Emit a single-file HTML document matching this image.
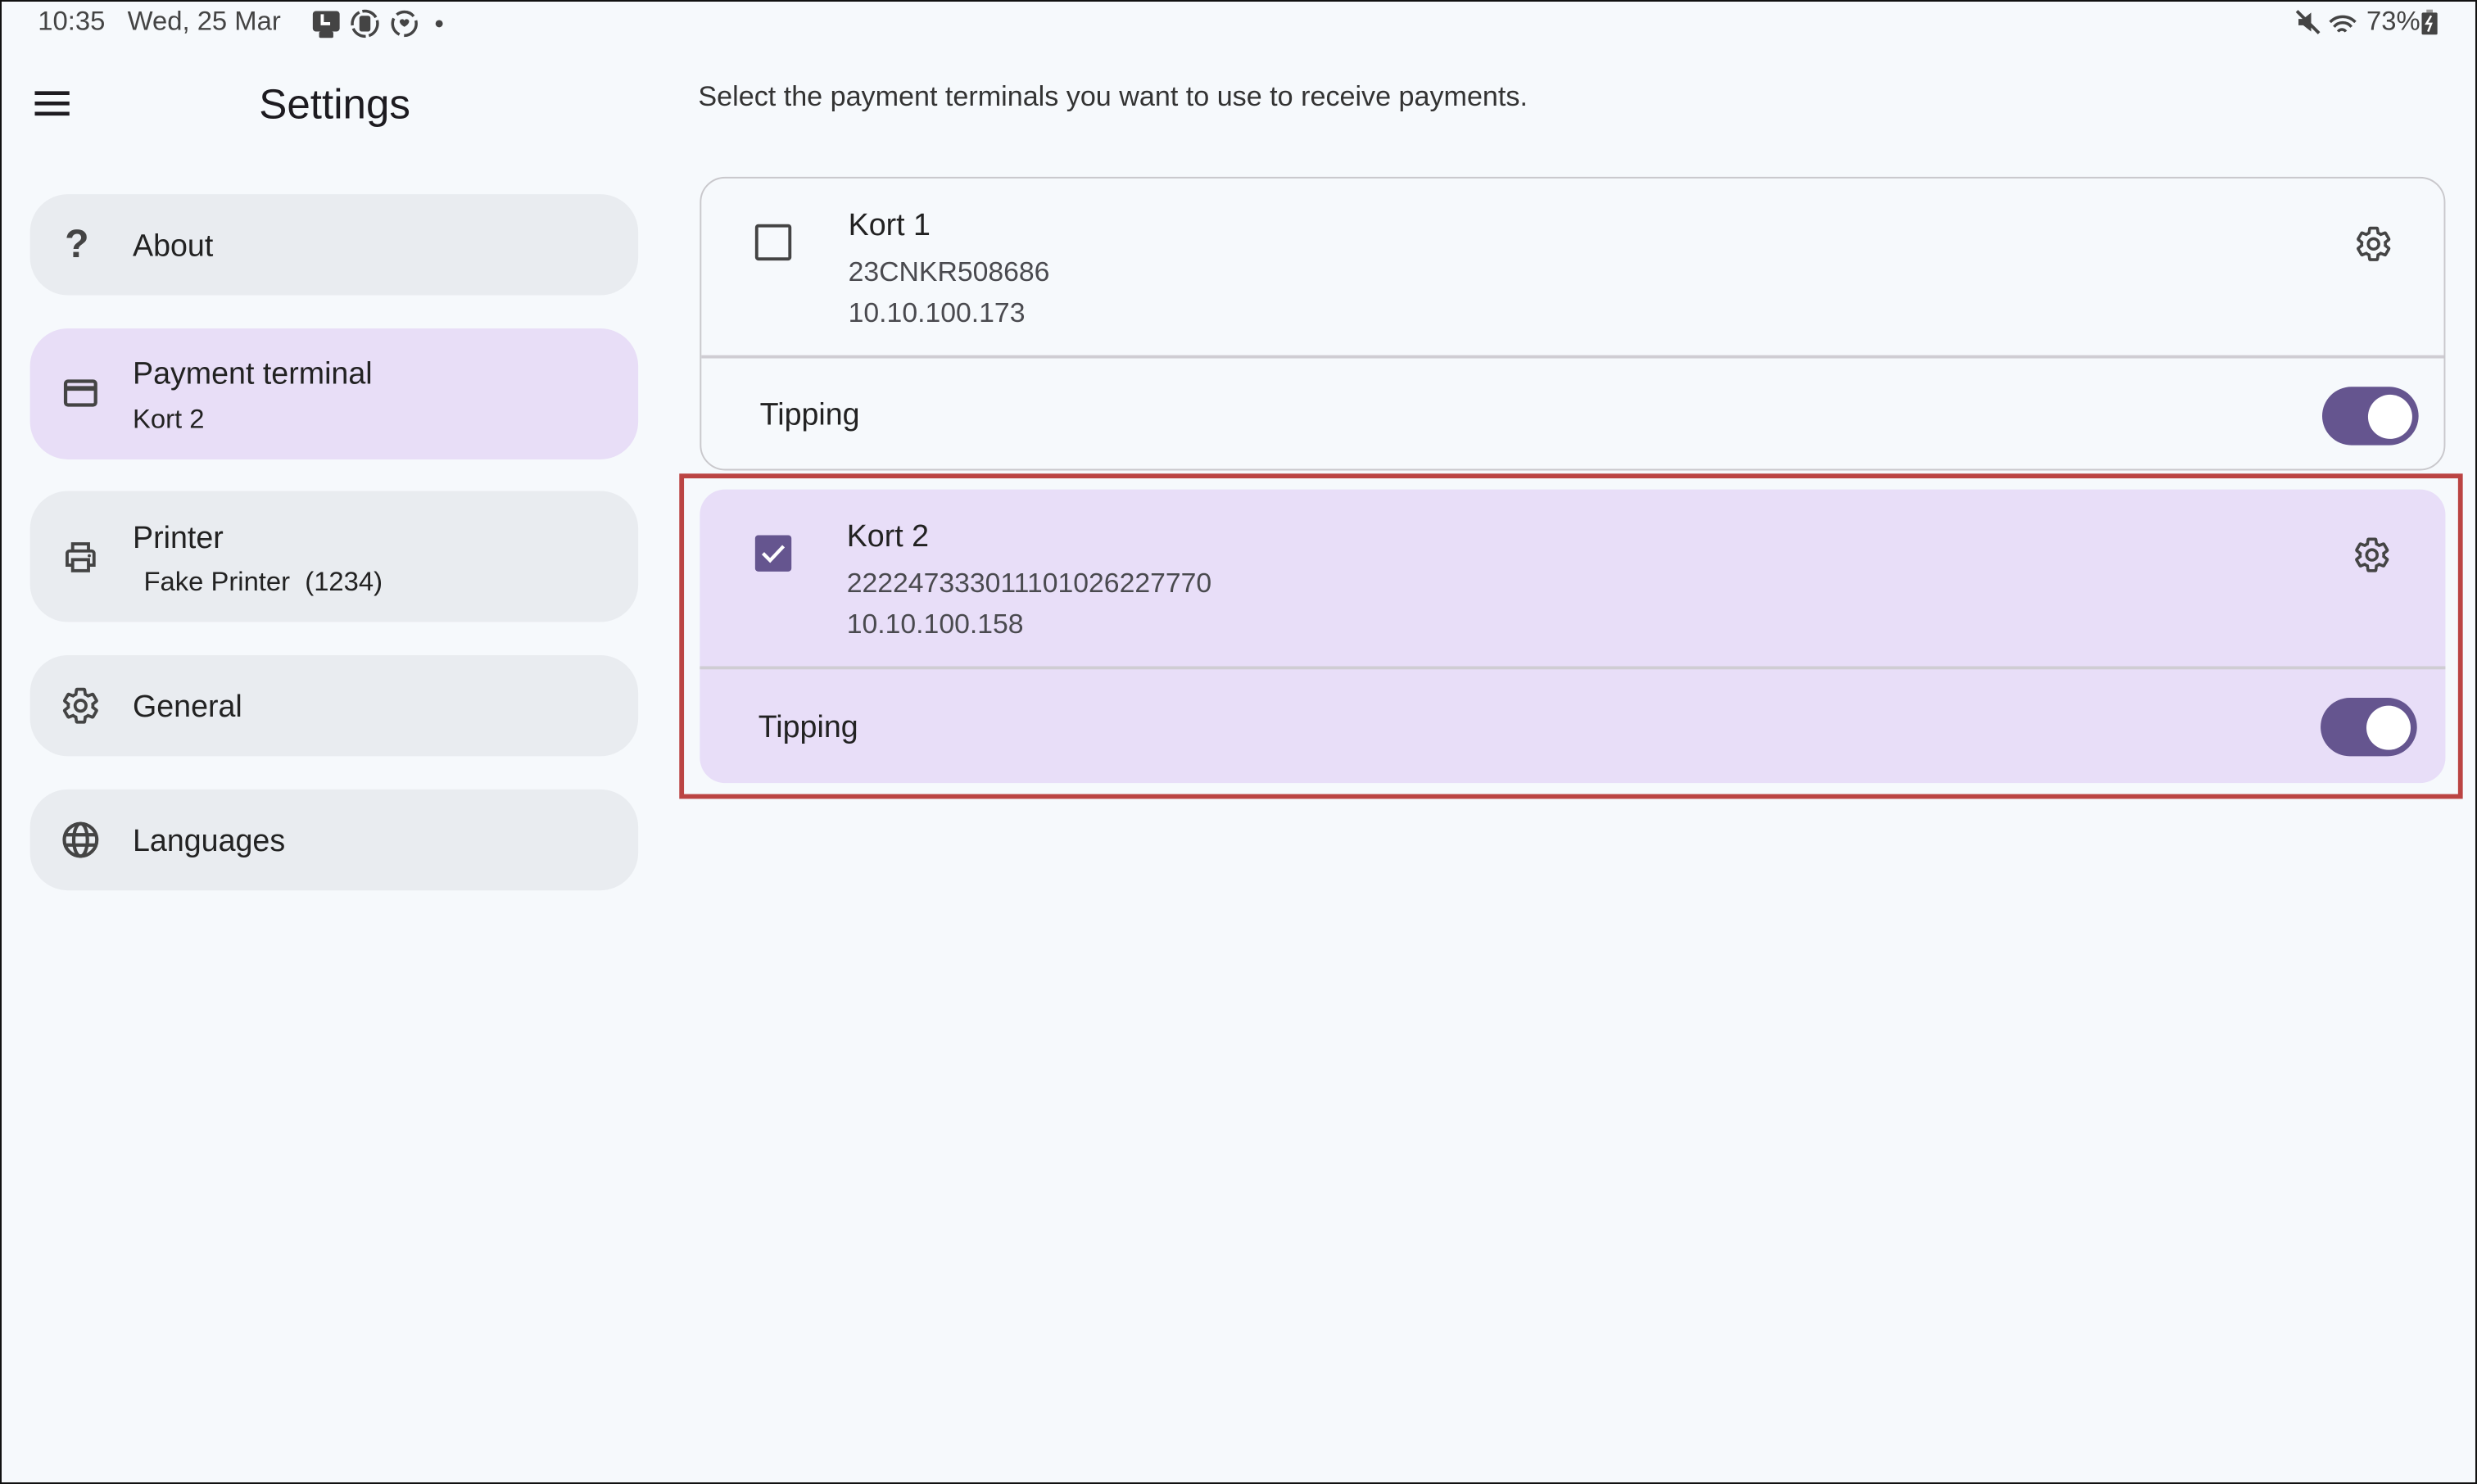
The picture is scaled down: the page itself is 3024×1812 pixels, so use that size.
<!DOCTYPE html>
<html><head><meta charset="utf-8"><style>
html,body{margin:0;padding:0;background:#f6f9fc;}
body{width:3024px;height:1812px;overflow:hidden;position:relative;}
#frame{position:absolute;left:0;top:0;width:3020px;height:1808px;border:2px solid #111;}
#s{position:absolute;left:0;top:0;width:1568px;height:940px;transform:scale(1.92857,1.92766);transform-origin:0 0;font-family:"Liberation Sans",sans-serif;color:#1d1b20;}
.a{position:absolute;white-space:nowrap;}
.nav{position:absolute;left:19px;width:385px;background:#e9ecf0;border-radius:24px;}
.nav.sel{background:#e8def7;}
.nav .t{position:absolute;left:65px;font-size:19.5px;color:#222;}
.nav .sub{position:absolute;left:65px;font-size:17px;color:#222;}
.nav svg{position:absolute;left:20px;}
.card{position:absolute;left:443px;width:1105px;height:186px;border-radius:16px;box-sizing:border-box;}
.card .title{position:absolute;left:93px;top:19px;font-size:19.5px;color:#222;}
.card .l1{position:absolute;left:93px;top:49px;font-size:17.5px;color:#4a4a4f;}
.card .l2{position:absolute;left:93px;top:75px;font-size:17.5px;color:#4a4a4f;}
.card .div{position:absolute;left:0;right:0;top:112px;height:1.5px;background:#cfcdd3;}
.card .tip{position:absolute;left:37px;top:140px;font-size:19.5px;color:#222;}
.card .sw{position:absolute;left:1026px;top:132px;width:61px;height:37px;border-radius:19px;background:#65558f;}
.card .sw:after{content:"";position:absolute;right:4px;top:4.5px;width:28px;height:28px;border-radius:50%;background:#fff;}
.card .gear{position:absolute;left:1046px;top:29px;}
</style></head><body>
<div id="s">
 <div class="a" style="left:24px;top:4px;font-size:17px;color:#444;">10:35&nbsp;&nbsp;&nbsp;Wed, 25 Mar</div>
 <svg class="a" style="left:197px;top:5px" width="90" height="20" viewBox="0 0 90 20">
  <rect x="1" y="2" width="17" height="13" rx="2" fill="#444"/><path d="M7 4v6h5" stroke="#fff" stroke-width="2" fill="none"/><rect x="5" y="15" width="9" height="4" rx="1" fill="#444"/>
  <circle cx="34" cy="10" r="8" fill="none" stroke="#444" stroke-width="1.8" stroke-dasharray="10 2"/><rect x="30.5" y="5" width="7" height="10" rx="1.5" fill="#444"/>
  <circle cx="59" cy="10" r="7.5" fill="none" stroke="#444" stroke-width="1.8" stroke-dasharray="12 3"/><path d="M56 8.5a1.6 1.6 0 0 1 3-0.5a1.6 1.6 0 0 1 3 0.5c0 2-3 3.5-3 3.5s-3-1.5-3-3.5z" fill="#444"/>
  <circle cx="81" cy="10" r="2.3" fill="#444"/>
 </svg>
 <svg class="a" style="left:1452px;top:5px" width="44" height="20" viewBox="0 0 44 20">
  <path d="M3 7h3l5-4v12l-5-4H3z" fill="#444"/><path d="M2 2l14 14" stroke="#444" stroke-width="2"/>
  <path d="M23 9a11 11 0 0 1 16 0M25.5 12a7 7 0 0 1 11 0M28 15a3 3 0 0 1 5 0" stroke="#444" stroke-width="1.8" fill="none"/>
 </svg>
 <div class="a" style="left:1498px;top:4px;font-size:17px;color:#444;">73%</div>
 <svg class="a" style="left:1533px;top:6px" width="10" height="16" viewBox="0 0 10 16"><rect x="3" y="0" width="4" height="2" fill="#999"/><rect x="0" y="2" width="10" height="14" rx="1" fill="#444"/><path d="M6 4L3 9h3l-2 5" stroke="#fff" stroke-width="1.3" fill="none"/></svg>

 <svg class="a" style="left:22px;top:57px" width="22" height="17" viewBox="0 0 22 17"><path d="M0 2h22M0 8.5h22M0 15h22" stroke="#1d1b20" stroke-width="2.4"/></svg>
 <div class="a" style="left:164px;top:51px;font-size:26.5px;color:#1d1b20;">Settings</div>

 <div class="nav" style="top:123px;height:64px;">
  <div class="a" style="left:22px;top:18px;font-size:25px;font-weight:bold;color:#444;">?</div>
  <div class="t" style="top:22px;">About</div>
 </div>
 <div class="nav sel" style="top:208px;height:83px;">
  <svg width="24" height="24" viewBox="0 0 24 24" style="top:29px"><rect x="2.5" y="4.5" width="19" height="15" rx="1.5" fill="none" stroke="#444" stroke-width="2.2"/><path d="M3 9h18" stroke="#444" stroke-width="3"/></svg>
  <div class="t" style="top:18px;">Payment terminal</div>
  <div class="sub" style="top:48px;">Kort 2</div>
 </div>
 <div class="nav" style="top:311px;height:83px;">
  <svg width="24" height="24" viewBox="0 0 24 24" style="top:30px"><path d="M7 8V3.5h10V8" fill="none" stroke="#444" stroke-width="2"/><path d="M6.5 17H3.5v-7.5a1.5 1.5 0 0 1 1.5-1.5h14a1.5 1.5 0 0 1 1.5 1.5V17h-3" fill="none" stroke="#444" stroke-width="2"/><rect x="7" y="13.5" width="10" height="7" fill="none" stroke="#444" stroke-width="2"/><circle cx="17.5" cy="11" r="1" fill="#444"/></svg>
  <div class="t" style="top:19px;">Printer</div>
  <div class="sub" style="top:48px;left:72px;">Fake Printer&nbsp; (1234)</div>
 </div>
 <div class="nav" style="top:415px;height:64px;">
  <svg width="26" height="26" viewBox="0 0 24 24" style="top:19px;left:19px"><path d="M19.14 12.94c.04-.3.06-.61.06-.94 0-.32-.02-.64-.07-.94l2.03-1.58c.18-.14.23-.41.12-.61l-1.92-3.32c-.12-.22-.37-.29-.59-.22l-2.39.96c-.5-.38-1.03-.7-1.62-.94l-.36-2.54c-.04-.24-.24-.41-.48-.41h-3.84c-.24 0-.43.17-.47.41l-.36 2.54c-.59.24-1.13.57-1.62.94l-2.39-.96c-.22-.08-.47 0-.59.22L2.74 8.87c-.12.21-.08.47.12.61l2.03 1.58c-.05.3-.09.63-.09.94s.02.64.07.94l-2.03 1.58c-.18.14-.23.41-.12.61l1.92 3.32c.12.22.37.29.59.22l2.39-.96c.5.38 1.03.7 1.62.94l.36 2.54c.05.24.24.41.48.41h3.84c.24 0 .44-.17.47-.41l.36-2.54c.59-.24 1.13-.56 1.62-.94l2.39.96c.22.08.47 0 .59-.22l1.92-3.32c.12-.22.07-.47-.12-.61z" fill="none" stroke="#444" stroke-width="1.8"/><circle cx="12" cy="12" r="3.2" fill="none" stroke="#444" stroke-width="1.8"/></svg>
  <div class="t" style="top:22px;">General</div>
 </div>
 <div class="nav" style="top:500px;height:64px;">
  <svg width="26" height="26" viewBox="0 0 24 24" style="top:19px;left:19px"><circle cx="12" cy="12" r="9.5" fill="none" stroke="#444" stroke-width="2"/><ellipse cx="12" cy="12" rx="4" ry="9.5" fill="none" stroke="#444" stroke-width="2"/><path d="M2.5 9h19M2.5 15h19" stroke="#444" stroke-width="2"/></svg>
  <div class="t" style="top:22px;">Languages</div>
 </div>

 <div class="a" style="left:442px;top:51px;font-size:17.7px;color:#333;">Select the payment terminals you want to use to receive payments.</div>

 <div class="card" style="top:112px;border:1.5px solid #c9c8cc;background:#f6f9fc;">
  <div class="a" style="left:34px;top:29px;width:19px;height:19px;border:2.2px solid #444;border-radius:2px;"></div>
  <div class="title">Kort 1</div><div class="l1">23CNKR508686</div><div class="l2">10.10.100.173</div>
  <svg class="gear" width="25" height="25" viewBox="0 0 24 24"><path d="M19.14 12.94c.04-.3.06-.61.06-.94 0-.32-.02-.64-.07-.94l2.03-1.58c.18-.14.23-.41.12-.61l-1.92-3.32c-.12-.22-.37-.29-.59-.22l-2.39.96c-.5-.38-1.03-.7-1.62-.94l-.36-2.54c-.04-.24-.24-.41-.48-.41h-3.84c-.24 0-.43.17-.47.41l-.36 2.54c-.59.24-1.13.57-1.62.94l-2.39-.96c-.22-.08-.47 0-.59.22L2.74 8.87c-.12.21-.08.47.12.61l2.03 1.58c-.05.3-.09.63-.09.94s.02.64.07.94l-2.03 1.58c-.18.14-.23.41-.12.61l1.92 3.32c.12.22.37.29.59.22l2.39-.96c.5.38 1.03.7 1.62.94l.36 2.54c.05.24.24.41.48.41h3.84c.24 0 .44-.17.47-.41l.36-2.54c.59-.24 1.13-.56 1.62-.94l2.39.96c.22.08.47 0 .59-.22l1.92-3.32c.12-.22.07-.47-.12-.61z" fill="none" stroke="#444" stroke-width="1.8"/><circle cx="12" cy="12" r="3.2" fill="none" stroke="#444" stroke-width="1.8"/></svg>
  <div class="div"></div>
  <div class="tip" style="top:139px;">Tipping</div>
  <div class="sw"></div>
 </div>

 <div class="a" style="left:430px;top:300px;width:1123px;height:200px;border:3px solid #bb4443;"></div>
 <div class="card" style="top:310px;background:#e8def8;">
  <div class="a" style="left:35px;top:29px;width:23px;height:23px;background:#65558f;border-radius:2px;"><svg width="23" height="23" viewBox="0 0 23 23" style="position:absolute;left:0;top:0"><path d="M5 11.5l4.5 4.5 8.5-9" stroke="#fff" stroke-width="2.2" fill="none"/></svg></div>
  <div class="title">Kort 2</div><div class="l1">222247333011101026227770</div><div class="l2">10.10.100.158</div>
  <svg class="gear" width="25" height="25" viewBox="0 0 24 24"><path d="M19.14 12.94c.04-.3.06-.61.06-.94 0-.32-.02-.64-.07-.94l2.03-1.58c.18-.14.23-.41.12-.61l-1.92-3.32c-.12-.22-.37-.29-.59-.22l-2.39.96c-.5-.38-1.03-.7-1.62-.94l-.36-2.54c-.04-.24-.24-.41-.48-.41h-3.84c-.24 0-.43.17-.47.41l-.36 2.54c-.59.24-1.13.57-1.62.94l-2.39-.96c-.22-.08-.47 0-.59.22L2.74 8.87c-.12.21-.08.47.12.61l2.03 1.58c-.05.3-.09.63-.09.94s.02.64.07.94l-2.03 1.58c-.18.14-.23.41-.12.61l1.92 3.32c.12.22.37.29.59.22l2.39-.96c.5.38 1.03.7 1.62.94l.36 2.54c.05.24.24.41.48.41h3.84c.24 0 .44-.17.47-.41l.36-2.54c.59-.24 1.13-.56 1.62-.94l2.39.96c.22.08.47 0 .59-.22l1.92-3.32c.12-.22.07-.47-.12-.61z" fill="none" stroke="#444" stroke-width="1.8"/><circle cx="12" cy="12" r="3.2" fill="none" stroke="#444" stroke-width="1.8"/></svg>
  <div class="div"></div>
  <div class="tip">Tipping</div>
  <div class="sw"></div>
 </div>
</div>
<div id="frame"></div>
</body></html>
